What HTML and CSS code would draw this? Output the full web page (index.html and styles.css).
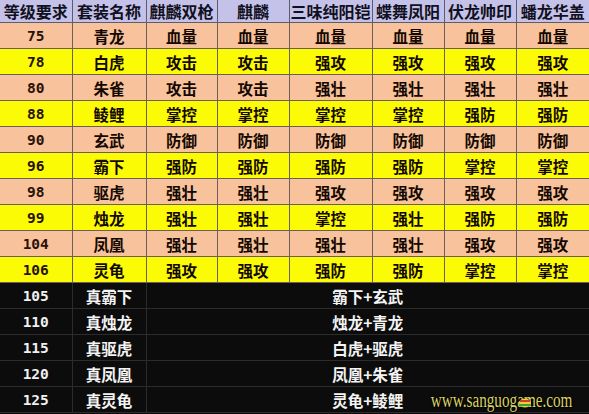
FILE: index.html
```html
<!DOCTYPE html>
<html lang="zh">
<head>
<meta charset="utf-8">
<title>套装属性表</title>
<link rel="stylesheet" href="styles.css">
</head>
<body>
<div class="page">
<table class="suits">
  <colgroup>
    <col class="c72"><col class="c74"><col class="c71"><col class="c72"><col class="c83"><col class="c72"><col class="c72"><col class="c73">
  </colgroup>
  <thead>
    <tr class="head">
      <th>等级要求</th><th>套装名称</th><th>麒麟双枪</th><th>麒麟</th><th>三味纯阳铠</th><th>蝶舞凤阳</th><th>伏龙帅印</th><th>蟠龙华盖</th>
    </tr>
  </thead>
  <tbody>
    <tr class="peach"><td class="num">75</td><td>青龙</td><td>血量</td><td>血量</td><td>血量</td><td>血量</td><td>血量</td><td>血量</td></tr>
    <tr class="yellow"><td class="num">78</td><td>白虎</td><td>攻击</td><td>攻击</td><td>强攻</td><td>强攻</td><td>强攻</td><td>强攻</td></tr>
    <tr class="peach"><td class="num">80</td><td>朱雀</td><td>攻击</td><td>攻击</td><td>强壮</td><td>强壮</td><td>强壮</td><td>强壮</td></tr>
    <tr class="yellow"><td class="num">88</td><td>鲮鲤</td><td>掌控</td><td>掌控</td><td>掌控</td><td>掌控</td><td>强防</td><td>强防</td></tr>
    <tr class="peach"><td class="num">90</td><td>玄武</td><td>防御</td><td>防御</td><td>防御</td><td>防御</td><td>防御</td><td>防御</td></tr>
    <tr class="yellow"><td class="num">96</td><td>霸下</td><td>强防</td><td>强防</td><td>强防</td><td>强防</td><td>掌控</td><td>掌控</td></tr>
    <tr class="peach"><td class="num">98</td><td>驱虎</td><td>强壮</td><td>强壮</td><td>强攻</td><td>强攻</td><td>强攻</td><td>强攻</td></tr>
    <tr class="yellow"><td class="num">99</td><td>烛龙</td><td>强壮</td><td>强壮</td><td>掌控</td><td>强壮</td><td>强防</td><td>强防</td></tr>
    <tr class="peach"><td class="num">104</td><td>凤凰</td><td>强壮</td><td>强壮</td><td>强壮</td><td>强壮</td><td>强攻</td><td>强攻</td></tr>
    <tr class="yellow"><td class="num">106</td><td>灵龟</td><td>强攻</td><td>强攻</td><td>强防</td><td>强防</td><td>掌控</td><td>掌控</td></tr>
  </tbody>
  <tbody class="dark">
    <tr><td class="num">105</td><td>真霸下</td><td colspan="6">霸下+玄武</td></tr>
    <tr><td class="num">110</td><td>真烛龙</td><td colspan="6">烛龙+青龙</td></tr>
    <tr><td class="num">115</td><td>真驱虎</td><td colspan="6">白虎+驱虎</td></tr>
    <tr><td class="num">120</td><td>真凤凰</td><td colspan="6">凤凰+朱雀</td></tr>
    <tr><td class="num">125</td><td>真灵龟</td><td colspan="6">灵龟+鲮鲤</td></tr>
  </tbody>
</table>
<div class="watermark"><span class="wm-text">www.sanguogame.com</span><svg class="logo" width="12" height="10" viewBox="0 0 12 10"><ellipse cx="6" cy="5" rx="6" ry="4.5" fill="#e8d23a"/><rect x="1" y="2" width="10" height="2" fill="#d83a2a"/><rect x="0.5" y="6" width="11" height="2" fill="#3aa03a"/></svg></div>
</div>
</body>
</html>
```

FILE: styles.css
```css
html, body {
  margin: 0;
  padding: 0;
  background: #0b0b0b;
}
.page {
  position: relative;
  width: 589px;
  height: 414px;
  overflow: hidden;
}
.suits {
  width: 589px;
  border-collapse: collapse;
  table-layout: fixed;
  font-family: "Noto Sans CJK SC", "Noto Sans", sans-serif;
}
.c72 { width: 72px; }
.c74 { width: 74px; }
.c71 { width: 71px; }
.c83 { width: 83px; }
.c73 { width: 73px; }
.suits th, .suits td {
  padding: 0;
  text-align: center;
  vertical-align: middle;
  white-space: nowrap;
  overflow: hidden;
}
.head th {
  height: 22px;
  background: #c5c2ea;
  color: #101020;
  font-size: 16px;
  font-weight: 700;
  line-height: 20px;
  border: 1px solid #5c5c6c;
  border-top: none;
}
tbody td {
  height: 25px;
  font-size: 15.5px;
  font-weight: 700;
  line-height: 20px;
  color: #140800;
  border: 1px solid #6a6058;
}
.peach td { background: #f7c29c; }
.yellow td { background: #fbfb06; }
.suits td.num {
  font-family: "DejaVu Sans Mono", "Liberation Mono", monospace;
  font-size: 14.5px;
  font-weight: 700;
  color: #2a1208;
}
.suits tr > :first-child { border-left: none; }
.suits tr > :last-child { border-right: none; }
.dark td {
  height: 25px;
  background: #0c0c0c;
  color: #f4f4f4;
  border: 1px solid #2c2c2c;
}
.dark tr:first-child td { border-top: 1px solid #1a1a1a; }
.suits .dark td.num { color: #f0f0f0; }
.watermark {
  position: absolute;
  right: 17px;
  bottom: 4px;
  width: 140px;
  height: 20px;
}
.wm-text {
  position: absolute;
  right: 0;
  bottom: 0;
  font-family: "Liberation Serif", serif;
  font-size: 20px;
  line-height: 20px;
  color: #d8d264;
  text-shadow: 0 0 2px #000, 1px 1px 1px #000;
  transform: scaleX(0.76);
  transform-origin: right bottom;
  white-space: nowrap;
}
.logo {
  position: absolute;
  left: 87px;
  top: 8px;
}
```
